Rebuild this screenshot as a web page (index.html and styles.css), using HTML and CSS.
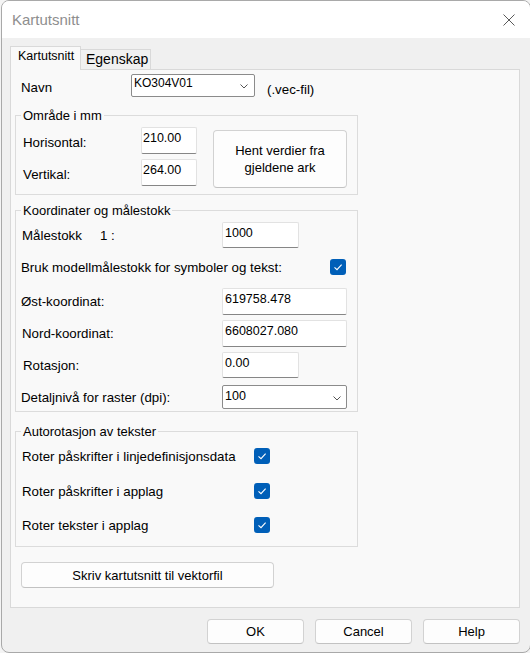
FILE: index.html
```html
<!DOCTYPE html>
<html lang="no">
<head>
<meta charset="utf-8">
<title>Kartutsnitt</title>
<link rel="stylesheet" href="styles.css">
</head>
<body>
<div class="window">
  <div class="titlebar">
    <span class="title">Kartutsnitt</span>
    <svg class="close" width="12" height="12" viewBox="0 0 12 12"><path d="M0.5 0.5 L11.5 11.5 M11.5 0.5 L0.5 11.5" stroke="#5a5a5a" stroke-width="1" fill="none"/></svg>
  </div>
  <div class="client">
    <div class="tabs">
      <div class="tab tab-active">Kartutsnitt</div>
      <div class="tab tab-inactive">Egenskap</div>
    </div>
    <div class="panel">
      <div class="navn-row">
        <span class="navn-label">Navn</span>
        <div class="combo combo-navn">
          <span class="combo-text">KO304V01</span>
          <svg class="chev" width="8" height="5" viewBox="0 0 8 5"><path d="M0.5 0.5 L4 4 L7.5 0.5" stroke="#555" stroke-width="1" fill="none"/></svg>
        </div>
        <span class="vec">(.vec-fil)</span>
      </div>

      <fieldset class="group group-omrade">
        <legend>Område i mm</legend>
        <div class="omrade-body">
          <div class="omrade-fields">
            <div class="frow"><span class="flabel">Horisontal:</span><div class="input input-s">210.00</div></div>
            <div class="frow"><span class="flabel">Vertikal:</span><div class="input input-s">264.00</div></div>
          </div>
          <button class="btn btn-hent">Hent verdier fra<br>gjeldene ark</button>
        </div>
      </fieldset>

      <fieldset class="group group-koord">
        <legend>Koordinater og målestokk</legend>
        <div class="krow krow-1">
          <span class="klabel pad6"><span class="malestokk">Målestokk</span><span>1 :</span></span>
          <div class="input input-m">1000</div>
        </div>
        <div class="krow krow-2">
          <span class="klabel klabel-wide pad5">Bruk modellmålestokk for symboler og tekst:</span>
          <svg class="cb" width="16" height="16" viewBox="0 0 16 16"><rect width="16" height="16" rx="3" fill="#005fb8"/><path d="M4.5 8.4 L7 10.7 L11.6 5.7" stroke="#fff" stroke-width="1.1" fill="none"/></svg>
        </div>
        <div class="krow krow-3">
          <span class="klabel pad5">Øst-koordinat:</span>
          <div class="input input-l">619758.478</div>
        </div>
        <div class="krow krow-4">
          <span class="klabel pad6">Nord-koordinat:</span>
          <div class="input input-l">6608027.080</div>
        </div>
        <div class="krow krow-5">
          <span class="klabel pad7">Rotasjon:</span>
          <div class="input input-m">0.00</div>
        </div>
        <div class="krow krow-6">
          <span class="klabel pad5">Detaljnivå for raster (dpi):</span>
          <div class="combo combo-dpi">
            <span class="combo-text">100</span>
            <svg class="chev" width="8" height="5" viewBox="0 0 8 5"><path d="M0.5 0.5 L4 4 L7.5 0.5" stroke="#555" stroke-width="1" fill="none"/></svg>
          </div>
        </div>
      </fieldset>

      <fieldset class="group group-auto">
        <legend>Autorotasjon av tekster</legend>
        <div class="arow arow-1">
          <span class="alabel">Roter påskrifter i linjedefinisjonsdata</span>
          <svg class="cb" width="16" height="16" viewBox="0 0 16 16"><rect width="16" height="16" rx="3" fill="#005fb8"/><path d="M4.5 8.4 L7 10.7 L11.6 5.7" stroke="#fff" stroke-width="1.1" fill="none"/></svg>
        </div>
        <div class="arow arow-2">
          <span class="alabel">Roter påskrifter i applag</span>
          <svg class="cb" width="16" height="16" viewBox="0 0 16 16"><rect width="16" height="16" rx="3" fill="#005fb8"/><path d="M4.5 8.4 L7 10.7 L11.6 5.7" stroke="#fff" stroke-width="1.1" fill="none"/></svg>
        </div>
        <div class="arow arow-3">
          <span class="alabel">Roter tekster i applag</span>
          <svg class="cb" width="16" height="16" viewBox="0 0 16 16"><rect width="16" height="16" rx="3" fill="#005fb8"/><path d="M4.5 8.4 L7 10.7 L11.6 5.7" stroke="#fff" stroke-width="1.1" fill="none"/></svg>
        </div>
      </fieldset>

      <button class="btn btn-skriv">Skriv kartutsnitt til vektorfil</button>
    </div>

    <div class="footer">
      <button class="btn btn-foot">OK</button>
      <button class="btn btn-foot">Cancel</button>
      <button class="btn btn-foot">Help</button>
    </div>
  </div>
</div>
</body>
</html>
```

FILE: styles.css
```css
* { box-sizing: border-box; }
html, body { margin: 0; padding: 0; }
body {
  width: 530px;
  height: 653px;
  overflow: hidden;
  background: #f4f4f4;
  font-family: "Liberation Sans", Arial, sans-serif;
  font-size: 13.3px;
  color: #000;
}
.window {
  margin-left: 1px;
  width: 530px;
  height: 653px;
  border: 1px solid #a9a9a9;
  border-radius: 8px;
  overflow: hidden;
  background: #f0f0f0;
}
.titlebar {
  height: 37px;
  background: #fff;
  display: flex;
  align-items: center;
  padding: 0 15px 0 10px;
}
.title {
  font-size: 15px;
  color: #8e8e8e;
}
.close { margin-left: auto; display: block; }

.client { padding: 8px 0 0 8px; }

.tabs {
  display: flex;
  align-items: flex-end;
  height: 24px;
  margin-bottom: -1px;
  position: relative;
  z-index: 1;
}
.tab {
  border: 1px solid #d9d9d9;
  white-space: nowrap;
}
.tab-active {
  width: 71px;
  height: 24px;
  border-bottom: none;
  background: #f9f9f9;
  font-size: 12.5px;
  padding: 2px 0 0 7px;
  line-height: 15px;
}
.tab-inactive {
  width: 70px;
  height: 21px;
  border-left: none;
  background: #f0f0f0;
  font-size: 14px;
  line-height: 16px;
  padding: 1px 0 0 5px;
}

.panel {
  width: 510px;
  height: 539px;
  border: 1px solid #d9d9d9;
  background: #f9f9f9;
}

.navn-row {
  display: flex;
  align-items: flex-start;
  margin-top: 4px;
  height: 23px;
  padding-left: 10px;
}
.navn-label { width: 110px; margin-top: 6px; line-height: 15px; }
.vec { margin-left: 12px; margin-top: 8px; line-height: 15px; }

.combo {
  display: flex;
  align-items: flex-start;
  background: #fff;
  border: 1px solid #8b8b8b;
  border-radius: 2px;
}
.combo-navn { width: 124px; height: 23px; padding: 1px 0 0 2px; font-size: 12px; }
.combo-dpi { width: 125px; height: 24px; padding: 3px 0 0 2px; font-size: 12.5px; }
.combo-text { line-height: 15px; }
.chev { margin-left: auto; align-self: center; display: block; }
.combo-navn .chev { margin-right: 6px; }
.combo-dpi .chev { margin-right: 5px; }

.group {
  margin: 0 0 0 4px;
  width: 343px;
  min-width: 0;
  border: 1px solid #dcdcdc;
  padding: 0;
}
.group legend {
  margin-left: 5px;
  padding: 0 2px;
  line-height: 15px;
  font-size: 13px;
}
.group-omrade { margin-top: 11px; padding: 4px 0 6px 0; }
.group-koord { margin-top: 8px; padding: 4px 0 2px 0; }
.group-auto { margin-top: 12px; padding: 9px 0 13px 0; }

.omrade-body { display: flex; align-items: flex-start; }
.omrade-fields { display: flex; flex-direction: column; gap: 5px; }
.frow { display: flex; align-items: center; height: 27px; }
.flabel { width: 125px; padding-left: 7px; padding-top: 3px; line-height: 15px; }

.input {
  background: #fff;
  border: 1px solid #e2e2e2;
  border-bottom-color: #868686;
  border-radius: 2px;
  font-size: 12.5px;
  line-height: 15px;
  padding: 3px 0 0 2px;
}
.input-s { width: 56px; height: 27px; padding-left: 1px; }
.input-m { width: 77px; height: 26px; }
.input-l { width: 125px; height: 27px; }

.btn {
  font-family: "Liberation Sans", Arial, sans-serif;
  font-size: 13px;
  color: #000;
  background: #fdfdfd;
  border: 1px solid #d2d2d2;
  border-bottom-color: #c2c2c2;
  border-radius: 4px;
  padding: 0;
  line-height: 17px;
}
.btn-hent { width: 134px; height: 58px; margin-left: 16px; margin-top: 3px; }
.btn-skriv { display: block; width: 253px; height: 26px; margin: 15px 0 0 10px; }

.krow { display: flex; align-items: center; }
.klabel { width: 206px; line-height: 15px; display: flex; }
.klabel-wide { width: 314px; }
.pad5 { padding-left: 5px; }
.pad6 { padding-left: 6px; }
.pad7 { padding-left: 7px; }
.malestokk { width: 78px; }
.krow-1 { height: 26px; }
.krow-2 { height: 16px; margin-top: 11px; }
.krow-3 { height: 27px; margin-top: 13px; }
.krow-4 { height: 27px; margin-top: 5px; }
.krow-5 { height: 26px; margin-top: 5px; }
.krow-6 { height: 24px; margin-top: 7px; }
.cb { display: block; }

.arow { display: flex; align-items: center; height: 16px; }
.arow-2 { margin-top: 19px; }
.arow-3 { margin-top: 18px; }
.alabel { width: 238px; padding-left: 6px; line-height: 15px; }

.footer {
  display: flex;
  justify-content: flex-end;
  gap: 11px;
  width: 510px;
  margin-top: 11px;
}
.btn-foot { width: 97px; height: 25px; }
```
